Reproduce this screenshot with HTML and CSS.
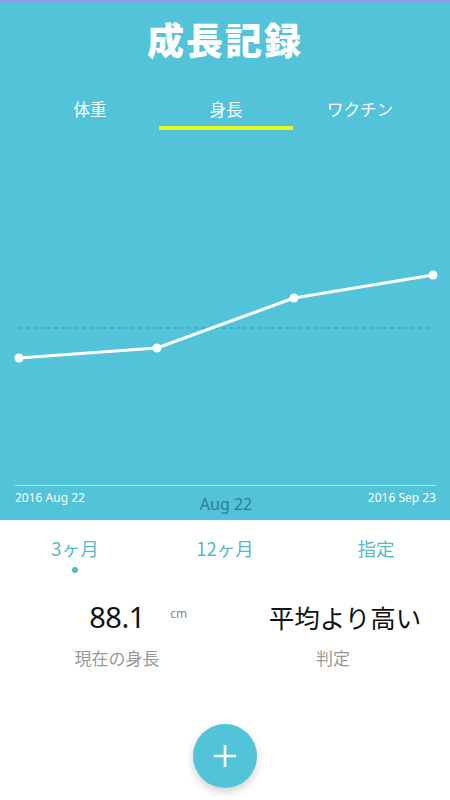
FILE: index.html
```html
<!DOCTYPE html>
<html lang="ja">
<head>
<meta charset="utf-8">
<link rel="stylesheet" href="styles.css">
</head>
<body>
<div class="app">
  <section class="top">
    <h1 class="title">成長記録</h1>
    <nav class="tabs">
      <span class="tab">体重</span>
      <span class="tab active">身長</span>
      <span class="tab">ワクチン</span>
    </nav>
    <svg class="chart" width="450" height="360" viewBox="0 0 450 360">
      <line x1="19" y1="198" x2="431" y2="198" stroke="#3a97ab" stroke-width="1.2" stroke-dasharray="4 3"/>
      <polyline points="19,228 157,218 294,168 433,145" fill="none" stroke="#fff" stroke-width="3" stroke-linejoin="round"/>
      <circle cx="19" cy="228" r="4.5" fill="#fff"/>
      <circle cx="157" cy="218" r="4.5" fill="#fff"/>
      <circle cx="294" cy="168" r="4.5" fill="#fff"/>
      <circle cx="433" cy="145" r="4.5" fill="#fff"/>
      <line x1="15" y1="355.5" x2="436" y2="355.5" stroke="rgba(255,255,255,0.6)" stroke-width="1"/>
    </svg>
    <div class="axis">
      <span class="axis-date">2016 Aug 22</span>
      <span class="axis-current">Aug 22</span>
      <span class="axis-date axis-end">2016 Sep 23</span>
    </div>
  </section>
  <section class="periods">
    <div class="period active">3ヶ月<span class="dot"></span></div>
    <div class="period">12ヶ月</div>
    <div class="period">指定</div>
  </section>
  <section class="stats">
    <div class="stat">
      <div class="value"><span class="num">88.1</span><span class="unit">cm</span></div>
      <div class="label">現在の身長</div>
    </div>
    <div class="stat stat-right">
      <div class="value jp">平均より高い</div>
      <div class="label">判定</div>
    </div>
  </section>
  <div class="fab-wrap">
    <button class="fab" aria-label="追加">
      <svg width="24" height="24" viewBox="0 0 24 24"><path d="M12 1v22M1 12h22" stroke="#fff" stroke-width="2.6" fill="none"/></svg>
    </button>
  </div>
</div>
</body>
</html>
```
FILE: styles.css
```css
* { box-sizing: border-box; }
html, body { margin: 0; padding: 0; }
body {
  width: 450px;
  height: 800px;
  overflow: hidden;
  background: #fff;
  font-family: "Noto Sans", "Noto Sans CJK JP", sans-serif;
}
.app { display: flex; flex-direction: column; height: 800px; }
.top {
  background: #52c3d8;
  height: 520px;
  border-top: 1px solid #a08cf2;
  display: flex;
  flex-direction: column;
}
.title {
  margin: 13px 0 0;
  text-align: center;
  color: #fff;
  font-family: "Noto Sans CJK JP", sans-serif;
  font-weight: 900;
  font-size: 37px;
  line-height: 50px;
  letter-spacing: 2px;
}
.tabs {
  display: grid;
  grid-template-columns: 135px 135px 135px;
  justify-content: center;
  margin-top: 33px;
}
.tab {
  justify-self: center;
  color: #fff;
  font-family: "Noto Sans CJK JP", sans-serif;
  font-size: 16.5px;
  line-height: 24px;
  padding-bottom: 5px;
  width: 134px;
  text-align: center;
  border-bottom: 4px solid transparent;
}
.tab.active { border-bottom-color: #e8f51e; margin-left: 2px; }
.chart { display: block; }
.axis {
  display: grid;
  grid-template-columns: 1fr auto 1fr;
  padding: 1px 14px 0 15px;
  color: #fff;
}
.axis-date { font-size: 12px; line-height: 14px; font-family: "Noto Sans", sans-serif; }
.axis-end { justify-self: end; }
.axis-current {
  font-size: 16px;
  line-height: 20px;
  margin-top: 3px;
  margin-left: 1px;
  color: #2d7f92;
}
.periods {
  display: grid;
  grid-template-columns: 1fr 1fr 1fr;
  padding-top: 15px;
  height: 66px;
}
.period {
  display: flex;
  flex-direction: column;
  align-items: center;
  color: #55b9cd;
  font-family: "Noto Sans CJK JP", sans-serif;
  font-size: 18.5px;
  line-height: 27px;
}
.period:last-child { padding-left: 2px; }
.dot {
  width: 6px;
  height: 6px;
  border-radius: 50%;
  background: #55b9cd;
  margin-top: 5px;
}
.stats {
  display: grid;
  grid-template-columns: 234px 1fr;
  padding-top: 10px;
}
.stat {
  display: flex;
  flex-direction: column;
  align-items: center;
}
.value {
  height: 40px;
  display: flex;
  align-items: center;
  position: relative;
  color: #111;
}
.num { font-size: 29px; font-family: "Noto Sans", sans-serif; letter-spacing: -0.5px; }
.unit {
  position: absolute;
  left: 81px;
  top: 9px;
  font-size: 12px;
  color: #888;
}
.jp { font-family: "Noto Sans CJK JP", sans-serif; font-size: 25.5px; margin-left: 6px; }
.label {
  margin-top: 10px;
  color: #999;
  font-family: "Noto Sans CJK JP", sans-serif;
  font-size: 17px;
  line-height: 24px;
}
.stat-right .label { margin-right: 18px; }
.fab-wrap {
  display: flex;
  justify-content: center;
  margin-top: auto;
  padding-bottom: 12px;
}
.fab {
  width: 64px;
  height: 64px;
  border-radius: 50%;
  border: none;
  background: #52c3d8;
  display: flex;
  align-items: center;
  justify-content: center;
  box-shadow: 0 4px 8px rgba(0,0,0,0.18);
  padding: 0;
}
```
